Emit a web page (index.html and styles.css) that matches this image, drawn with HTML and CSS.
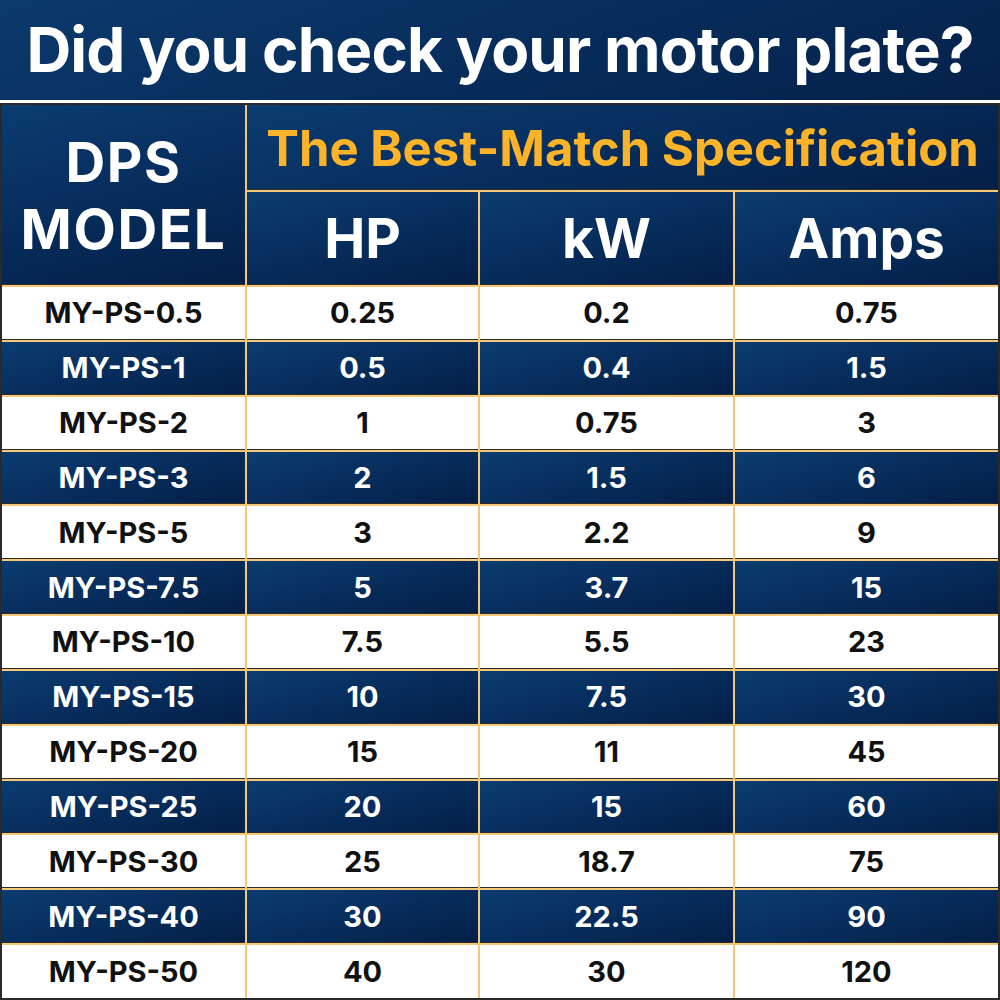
FILE: index.html
```html
<!DOCTYPE html>
<html>
<head>
<meta charset="utf-8">
<link rel="stylesheet" href="styles.css">
</head>
<body>
<header class="title">Did you check your motor plate?</header>
<div class="sep"></div>
<div class="table">
  <div class="cell dark model"><span class="mline">DPS</span><span class="mline">MODEL</span></div>
  <div class="cell dark spec">The Best-Match Specification</div>
  <div class="cell dark colhead">HP</div>
  <div class="cell dark colhead">kW</div>
  <div class="cell dark colhead">Amps</div>

  <div class="cell light">MY-PS-0.5</div><div class="cell light">0.25</div><div class="cell light">0.2</div><div class="cell light">0.75</div>
  <div class="cell dark">MY-PS-1</div><div class="cell dark">0.5</div><div class="cell dark">0.4</div><div class="cell dark">1.5</div>
  <div class="cell light">MY-PS-2</div><div class="cell light">1</div><div class="cell light">0.75</div><div class="cell light">3</div>
  <div class="cell dark">MY-PS-3</div><div class="cell dark">2</div><div class="cell dark">1.5</div><div class="cell dark">6</div>
  <div class="cell light">MY-PS-5</div><div class="cell light">3</div><div class="cell light">2.2</div><div class="cell light">9</div>
  <div class="cell dark">MY-PS-7.5</div><div class="cell dark">5</div><div class="cell dark">3.7</div><div class="cell dark">15</div>
  <div class="cell light">MY-PS-10</div><div class="cell light">7.5</div><div class="cell light">5.5</div><div class="cell light">23</div>
  <div class="cell dark">MY-PS-15</div><div class="cell dark">10</div><div class="cell dark">7.5</div><div class="cell dark">30</div>
  <div class="cell light">MY-PS-20</div><div class="cell light">15</div><div class="cell light">11</div><div class="cell light">45</div>
  <div class="cell dark">MY-PS-25</div><div class="cell dark">20</div><div class="cell dark">15</div><div class="cell dark">60</div>
  <div class="cell light">MY-PS-30</div><div class="cell light">25</div><div class="cell light">18.7</div><div class="cell light">75</div>
  <div class="cell dark">MY-PS-40</div><div class="cell dark">30</div><div class="cell dark">22.5</div><div class="cell dark">90</div>
  <div class="cell light last">MY-PS-50</div><div class="cell light last">40</div><div class="cell light last">30</div><div class="cell light last">120</div>
</div>
</body>
</html>
```

FILE: styles.css
```css
* { box-sizing: border-box; }
html, body {
  margin: 0;
  padding: 0;
  width: 1000px;
  height: 1000px;
  background: #ffffff;
  overflow: hidden;
  font-family: Inter, "Liberation Sans", sans-serif;
  font-weight: 700;
}
.title {
  height: 100px;
  background: linear-gradient(160deg, #0b3a6c 0%, #072c5a 55%, #04214a 100%);
  color: #ffffff;
  font-size: 62px;
  letter-spacing: -0.9px;
  display: flex;
  align-items: center;
  justify-content: center;
  padding-bottom: 2px;
}
.sep {
  height: 3px;
  background: #ffffff;
}
.table {
  height: 897px;
  border: 2px solid #2a2a2a;
  background: #f3c878;
  display: grid;
  grid-template-columns: 243px 231px 253px 263px;
  grid-template-rows: 85px 93px repeat(13, 1fr);
  gap: 2px;
}
.cell {
  display: flex;
  align-items: center;
  justify-content: center;
  text-align: center;
  font-size: 29px;
  border-bottom: 1px solid #2e2a26;
}
.cell.last { border-bottom: none; }
.dark {
  background: linear-gradient(165deg, #0b3c70 0%, #072d5c 50%, #031f47 100%);
  color: #ffffff;
}
.light {
  background: #ffffff;
  color: #111111;
}
.model {
  grid-row: 1 / 3;
  flex-direction: column;
  font-size: 55px;
  letter-spacing: 1.6px;
  padding-top: 2px;
}
.mline {
  display: block;
  line-height: 67px;
}
.spec {
  grid-column: 2 / 5;
  color: #fbb32a;
  font-size: 49px;
  padding-top: 2px;
}
.colhead {
  font-size: 55px;
}
```
